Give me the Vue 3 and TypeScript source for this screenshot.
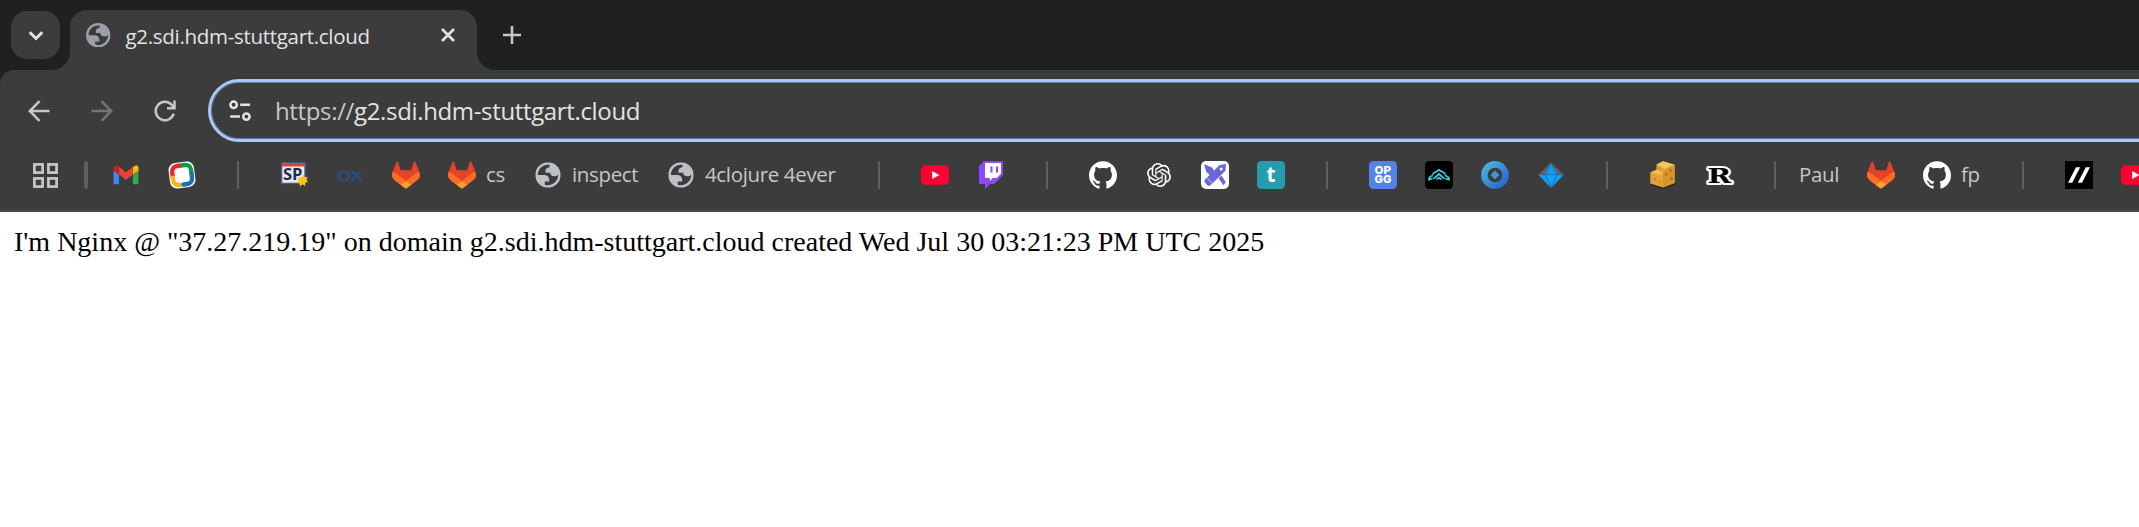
<script setup lang="ts">
interface Glyph {
  text: string
  x: number
  y: number
  width: number
  style: string
}

interface Bookmark {
  kind: 'icon' | 'label' | 'separator'
  icon?: string
  overlay?: string
  glyphs?: Glyph[]
  label?: string
  size?: string
}

const bookmarks: Bookmark[] = [
  { kind: 'icon', icon: 'gmail' },
  { kind: 'icon', icon: 'ring' },
  { kind: 'separator' },
  {
    kind: 'icon',
    icon: 'sp',
    overlay: 'star',
    glyphs: [{ text: 'SP', x: 3, y: 18.6, width: 19.5, style: 'glyph-sp' }],
  },
  {
    kind: 'icon',
    icon: 'blank',
    glyphs: [{ text: 'OX', x: 0.8, y: 19.6, width: 26.4, style: 'glyph-ox' }],
  },
  { kind: 'icon', icon: 'gitlab' },
  { kind: 'icon', icon: 'gitlab', label: 'cs', size: 'w-cs' },
  { kind: 'icon', icon: 'globe', label: 'inspect', size: 'w-inspect' },
  { kind: 'icon', icon: 'globe', label: '4clojure 4ever', size: 'w-clojure' },
  { kind: 'separator' },
  { kind: 'icon', icon: 'youtube' },
  { kind: 'icon', icon: 'twitch' },
  { kind: 'separator' },
  { kind: 'icon', icon: 'github' },
  { kind: 'icon', icon: 'openai' },
  { kind: 'icon', icon: 'excalidraw' },
  {
    kind: 'icon',
    icon: 'teal',
    glyphs: [{ text: 't', x: 9.4, y: 21, width: 9, style: 'glyph-t' }],
  },
  { kind: 'separator' },
  {
    kind: 'icon',
    icon: 'opgg',
    glyphs: [
      { text: 'OP', x: 5.6, y: 13, width: 16.5, style: 'glyph-opgg' },
      { text: 'GG', x: 5.6, y: 22.4, width: 16.8, style: 'glyph-opgg' },
    ],
  },
  { kind: 'icon', icon: 'lotus' },
  { kind: 'icon', icon: 'disc' },
  { kind: 'icon', icon: 'gem' },
  { kind: 'separator' },
  { kind: 'icon', icon: 'crate' },
  {
    kind: 'icon',
    icon: 'blank',
    glyphs: [{ text: 'R', x: 2.6, y: 21.6, width: 23.6, style: 'glyph-r' }],
  },
  { kind: 'separator' },
  { kind: 'label', label: 'Paul', size: 'w-paul' },
  { kind: 'icon', icon: 'gitlab' },
  { kind: 'icon', icon: 'github', label: 'fp', size: 'w-fp' },
  { kind: 'separator' },
  { kind: 'icon', icon: 'slashes' },
  { kind: 'icon', icon: 'youtube' },
]
</script>

<template>
  <div class="window">
    <svg class="defs" aria-hidden="true">
      <linearGradient id="discFill" x1="0" y1="0" x2="1" y2="1">
        <stop offset="0" stop-color="#4fb3d9" />
        <stop offset="1" stop-color="#2467d1" />
      </linearGradient>
      <symbol id="globe" viewBox="2 2 20 20">
        <path fill="currentColor" fill-rule="evenodd" d="M12 2c5.523 0 10 4.477 10 10s-4.477 10-10 10S2 17.523 2 12 6.477 2 12 2zM4 12h4.4c3.407.022 4.922 1.73 4.543 5.127H9.488v2.47a8.004 8.004 0 0 0 10.498-8.083C19.327 12.504 18.332 13 17 13c-2.137 0-3.206-.916-3.206-2.75h-3.748c-.274-2.728.683-4.092 2.87-4.092 0-.975.327-1.597.811-1.97A8.004 8.004 0 0 0 4 12z" />
      </symbol>
      <symbol id="i-blank" viewBox="0 0 28 28"></symbol>
      <symbol id="i-globe" viewBox="0 0 28 28">
        <use href="#globe" x="1.3" y="1.3" width="25.4" height="25.4" />
      </symbol>
      <symbol id="i-gmail" viewBox="0 0 28 28">
        <svg x="1.3" y="4.3" width="25.4" height="19.2" viewBox="52 42 88 66">
          <path fill="#4285f4" d="M58 108h14V74L52 59v43c0 3.32 2.69 6 6 6" />
          <path fill="#34a853" d="M120 108h14c3.32 0 6-2.69 6-6V59l-20 15" />
          <path fill="#fbbc04" d="M120 48v26l20-15v-8c0-7.42-8.47-11.65-14.4-7.2" />
          <path fill="#ea4335" d="M72 74V48l24 18 24-18v26L96 92" />
          <path fill="#c5221f" d="M52 51v8l20 15V48l-5.6-4.2c-5.94-4.45-14.4-.22-14.4 7.2" />
        </svg>
      </symbol>
      <symbol id="i-ring" viewBox="0 0 28 28">
        <g transform="rotate(-7 14 14)">
          <rect x="1.2" y="1.2" width="25.6" height="25.6" rx="7" fill="#fff" />
          <path d="M4.6 14.600V9.900a5.500 5.500 0 0 1 5.500-5.500H15" fill="none" stroke="#e8262b" stroke-width="4.400" />
          <path d="M14 4.400h4.200a5.400 5.400 0 0 1 5.400 5.400V14" fill="none" stroke="#0c9d4b" stroke-width="4.400" />
          <path d="M4.500 13.600v4.600a5.400 5.400 0 0 0 5.400 5.400h3" fill="none" stroke="#fcb31b" stroke-width="4.400" />
          <path d="M23.600 14v4.200a5.400 5.400 0 0 1-5.400 5.400H14.500" fill="none" stroke="#1d6db8" stroke-width="4.400" stroke-linecap="round" />
        </g>
      </symbol>
      <symbol id="i-sp" viewBox="0 0 28 28">
        <rect x="1.6" y="2" width="23.4" height="20.4" fill="#f6e6e6" stroke="#3c6396" stroke-width="1.4" />
        <path d="M2 4h23" stroke="#d64541" stroke-width="3" />
        <path d="M2 3h23" stroke="#b6322f" stroke-width="1" stroke-dasharray="2 2" />
      </symbol>
      <symbol id="i-star" viewBox="0 0 28 28">
        <path d="M23.2 13.2l1.500 3.300 3-.8-1.200 3 1.500 2.400-2.900.5.2 3.600-2.700-2-2.800 2.400-.2-3.300-3.200-.8 2.500-2.200-1.200-3 3.200.4z" fill="#fcc41c" />
      </symbol>
      <symbol id="i-gitlab" viewBox="0 0 25 24">
        <path fill="#e24329" d="M24.507 9.5l-.034-.09L21.082.562a.896.896 0 0 0-1.694.091l-2.29 7.01H7.825L5.535.653a.898.898 0 0 0-1.694-.09L.451 9.411.416 9.5a6.297 6.297 0 0 0 2.09 7.278l.012.01.03.022 5.16 3.867 2.56 1.935 1.554 1.176a1.051 1.051 0 0 0 1.268 0l1.555-1.176 2.56-1.935 5.197-3.89.014-.01A6.297 6.297 0 0 0 24.507 9.5z" />
        <path fill="#fc6d26" d="M24.507 9.5l-.034-.09a11.44 11.44 0 0 0-4.56 2.051l-7.447 5.632 4.742 3.584 5.197-3.89.014-.01A6.297 6.297 0 0 0 24.507 9.5z" />
        <path fill="#fca326" d="M7.707 20.677l2.56 1.935 1.555 1.176a1.051 1.051 0 0 0 1.268 0l1.555-1.176 2.56-1.935-4.743-3.584z" />
        <path fill="#fc6d26" d="M5.01 11.461a11.43 11.43 0 0 0-4.56-2.05L.416 9.5a6.297 6.297 0 0 0 2.09 7.278l.012.01.03.022 5.16 3.867 4.745-3.584z" />
      </symbol>
      <symbol id="i-youtube" viewBox="0 0 28 28">
        <rect y="4.2" width="28" height="19.6" rx="4.6" fill="#ff0033" />
        <path d="M11.2 9.9v8.2l7.2-4.1z" fill="#fff" />
      </symbol>
      <symbol id="i-twitch" viewBox="0 0 2400 2800">
        <path fill="#fff" d="M2200 1300l-400 400h-400l-350 350v-350H600V200h1600z" />
        <path fill="#9146ff" fill-rule="evenodd" d="M500 0L0 500v1800h600v500l500-500h400l900-900V0zM2200 1300l-400 400h-400l-350 350v-350H600V200h1600z" />
        <path fill="#9146ff" d="M1700 550h200v600h-200zM1150 550h200v600h-200z" />
      </symbol>
      <symbol id="i-github" viewBox="0 0 24 24">
        <path fill="#fff" d="M12 .297c-6.63 0-12 5.373-12 12 0 5.303 3.438 9.8 8.205 11.385.6.113.82-.258.82-.577 0-.285-.01-1.04-.015-2.04-3.338.724-4.042-1.61-4.042-1.61C4.422 18.07 3.633 17.7 3.633 17.7c-1.087-.744.084-.729.084-.729 1.205.084 1.838 1.236 1.838 1.236 1.07 1.835 2.809 1.305 3.495.998.108-.776.417-1.305.76-1.605-2.665-.3-5.466-1.332-5.466-5.93 0-1.31.465-2.38 1.235-3.22-.135-.303-.54-1.523.105-3.176 0 0 1.005-.322 3.3 1.23.96-.267 1.98-.399 3-.405 1.02.006 2.04.138 3 .405 2.28-1.552 3.285-1.23 3.285-1.23.645 1.653.24 2.873.12 3.176.765.84 1.23 1.91 1.23 3.22 0 4.61-2.805 5.625-5.475 5.92.42.36.81 1.096.81 2.22 0 1.606-.015 2.896-.015 3.286 0 .315.21.69.825.57C20.565 22.092 24 17.592 24 12.297c0-6.627-5.373-12-12-12" />
      </symbol>
      <symbol id="i-openai" viewBox="-2 -2 28 28">
        <path fill="#fff" d="M22.2819 9.8211a5.9847 5.9847 0 0 0-.5157-4.9108 6.0462 6.0462 0 0 0-6.5098-2.9A6.0651 6.0651 0 0 0 4.9807 4.1818a5.9847 5.9847 0 0 0-3.9977 2.9 6.0462 6.0462 0 0 0 .7427 7.0966 5.98 5.98 0 0 0 .511 4.9107 6.051 6.051 0 0 0 6.5146 2.9001A5.9847 5.9847 0 0 0 13.2599 24a6.0557 6.0557 0 0 0 5.7718-4.2058 5.9894 5.9894 0 0 0 3.9977-2.9001 6.0557 6.0557 0 0 0-.7475-7.0729zm-9.022 12.6081a4.4755 4.4755 0 0 1-2.8764-1.0408l.1419-.0804 4.7783-2.7582a.7948.7948 0 0 0 .3927-.6813v-6.7369l2.02 1.1686a.071.071 0 0 1 .038.052v5.5826a4.504 4.504 0 0 1-4.4945 4.4944zm-9.6607-4.1254a4.4708 4.4708 0 0 1-.5346-3.0137l.142.0852 4.783 2.7582a.7712.7712 0 0 0 .7806 0l5.8428-3.3685v2.3324a.0804.0804 0 0 1-.0332.0615L9.74 19.9502a4.4992 4.4992 0 0 1-6.1408-1.6464zM2.3408 7.8956a4.485 4.485 0 0 1 2.3655-1.9728V11.6a.7664.7664 0 0 0 .3879.6765l5.8144 3.3543-2.0201 1.1685a.0757.0757 0 0 1-.071 0l-4.8303-2.7865A4.504 4.504 0 0 1 2.3408 7.872zm16.5963 3.8558L13.1038 8.364 15.1192 7.2a.0757.0757 0 0 1 .071 0l4.8303 2.7913a4.4944 4.4944 0 0 1-.6765 8.1042v-5.6772a.79.79 0 0 0-.407-.667zm2.0107-3.0231l-.142-.0852-4.7735-2.7818a.7759.7759 0 0 0-.7854 0L9.409 9.2297V6.8974a.0662.0662 0 0 1 .0284-.0615l4.8303-2.7866a4.4992 4.4992 0 0 1 6.6802 4.66zM8.3065 12.863l-2.02-1.1638a.0804.0804 0 0 1-.038-.0567V6.0742a4.4992 4.4992 0 0 1 7.3757-3.4537l-.142.0805L8.704 5.459a.7948.7948 0 0 0-.3927.6813zm1.0976-2.3654l2.602-1.4998 2.6069 1.4998v2.9994l-2.5974 1.4997-2.6067-1.4997Z" />
      </symbol>
      <symbol id="i-excalidraw" viewBox="0 0 28 28">
        <rect width="28" height="28" rx="5" fill="#fff" />
        <path d="M3 3.2l8.5 3.6 1.8 4-3.6 4.2-4.4-4.2zM17.6 17.2l2.8-2.6 4.4 6.6-2.4 3z" fill="#6965db" />
        <path d="M25 3l-.6 6.8L9.2 24.6 7 24.8 3.4 21l.4-2.2L18.6 4z" fill="#6965db" />
        <circle cx="20.2" cy="8" r="1.5" fill="#fff" />
        <path d="M6.4 17.2l4.8 5" stroke="#fff" stroke-width=".7" />
      </symbol>
      <symbol id="i-teal" viewBox="0 0 28 28">
        <rect width="28" height="28" rx="4.5" fill="#259dad" />
      </symbol>
      <symbol id="i-opgg" viewBox="0 0 28 28">
        <rect width="28" height="28" rx="4.5" fill="#5383e8" />
      </symbol>
      <symbol id="i-lotus" viewBox="0 0 28 28">
        <rect width="28" height="28" rx="4.5" fill="#000" />
        <g fill="none" stroke="#3dd5de" stroke-width="1.7">
          <path d="M7.500 13.600c1-2.400 3.700-2.200 6.500-4.800 2.800 2.600 5.500 2.400 6.500 4.800" />
          <path d="M8.500 17.800l5.500-4.800 5.500 4.800M11.500 18.700l2.500-2 2.500 2" />
          <path d="M8 14.500c-2.500.5-4 2-4 4l3.500-1M20 14.500c2.500.5 4 2 4 4l-3.500-1" />
        </g>
      </symbol>
      <symbol id="i-disc" viewBox="0 0 28 28">
        <circle cx="14" cy="14" r="10.600" fill="none" stroke="url(#discFill)" stroke-width="6.600" />
        <path d="M14 9.600l4.400 4.400-4.400 4.400L9.600 14z" fill="#3f97d8" />
      </symbol>
      <symbol id="i-gem" viewBox="0 0 28 28">
        <path d="M14 1.500L1.300 13.800l4.900 1.600h15.500l5-1.600z" fill="#67616a" />
        <path d="M14 1.500L8 13.600l12.300-.2z" fill="#0d9bf2" />
        <path d="M1.300 13.800l6.700-.3 12.300-.2 6.400.5L14 27z" fill="#109ffa" />
        <path d="M14 2L8 13.500l6 13 6.300-13L14 2M2 13.800l6-.3h12.300l6 .3" fill="none" stroke="#29638f" stroke-width=".8" />
      </symbol>
      <symbol id="i-crate" viewBox="0 0 28 28">
        <path d="M2 24l11 4 13-4v-3H2z" fill="#2a2724" />
        <path d="M7.500 3.500L14 .3l11.600 3.400V22L14 26.600l-12.700-4V11.500l6.200-2.700z" fill="#e3a235" />
        <path d="M7.500 3.500L14 .3l11.600 3.400-9 4.300z" fill="#f4c55d" />
        <path d="M1.300 11.500l6.200-2.700 6 2.700-1 2.700z" fill="#f0bd54" />
        <path d="M16.600 8l9-4.300V22L14 26.600V13z" fill="#d8942d" />
        <g fill="#ad6f20">
          <circle cx="21.500" cy="9.500" r="1.300" /><circle cx="17.300" cy="13.500" r="1.400" />
          <circle cx="22.500" cy="17.500" r="1.500" /><circle cx="6" cy="18" r="1" />
          <circle cx="10.300" cy="7.600" r=".7" /><circle cx="10.500" cy="21" r=".8" />
        </g>
      </symbol>
      <symbol id="i-slashes" viewBox="0 0 28 28">
        <rect width="28" height="28" fill="#000" />
        <path d="M3 21.800L11 6.200h4.200L7.200 21.800zM12.800 21.800l8-15.600H25l-8 15.600z" fill="#fff" />
      </symbol>
    </svg>

    <header class="tabstrip">
      <button class="tab-search" type="button">
        <svg width="16" height="11" viewBox="0 0 16 11"><path d="M1.700 2.200L8 8.500l6.300-6.300" fill="none" stroke="#e3e3e3" stroke-width="3" /></svg>
      </button>
      <div class="tab">
        <svg class="favicon"><use href="#globe" /></svg>
        <span class="tab-title">g2.sdi.hdm-stuttgart.cloud</span>
        <svg class="close" width="14" height="14" viewBox="0 0 14 14"><path d="M1 1l12 12M13 1L1 13" stroke="#e3e3e3" stroke-width="2.600" /></svg>
      </div>
      <svg class="new-tab" width="18" height="18" viewBox="0 0 18 18"><path d="M9 0v18M0 9h18" stroke="#c7c7c7" stroke-width="2.600" /></svg>
    </header>

    <section class="chrome">
      <div class="toolbar">
        <svg class="nav" viewBox="0 0 22 22"><path d="M11.500 1.200L1.800 11l9.700 9.800M2 11h19.500" fill="none" stroke="#c7c7c7" stroke-width="2.500" /></svg>
        <svg class="nav dim" viewBox="0 0 22 22"><path d="M10.500 1.200L20.200 11l-9.700 9.800M20 11H.5" fill="none" stroke="#757575" stroke-width="2.500" /></svg>
        <svg class="nav" viewBox="0 0 22 22"><path d="M19.700 13.700A9.200 9.200 0 1 1 18 5.200l1.800 2.200M20.500.6v7.700H13" fill="none" stroke="#c7c7c7" stroke-width="2.500" /></svg>
        <div class="omnibox">
          <svg class="tune" width="22" height="22" viewBox="0 0 22 22" fill="none" stroke="#e3e3e3" stroke-width="2.500">
            <circle cx="4.600" cy="4.800" r="3.200" /><path d="M11.200 4.800H21M1.200 16.600H11" /><circle cx="17.400" cy="16.600" r="3.200" />
          </svg>
          <span class="url"><span class="scheme">https://</span><span class="host">g2.sdi.hdm-stuttgart.cloud</span></span>
        </div>
      </div>
      <nav class="bookmarks">
        <svg class="apps" width="25" height="25" viewBox="0 0 25 25" fill="none" stroke="#c7c7c7" stroke-width="2.700">
          <rect x="1.400" y="1.400" width="8.200" height="8.200" /><rect x="15.400" y="1.400" width="8.200" height="8.200" />
          <rect x="1.400" y="15.400" width="8.200" height="8.200" /><rect x="15.400" y="15.400" width="8.200" height="8.200" />
        </svg>
        <span class="apps-divider"></span>
        <template v-for="(item, index) in bookmarks" :key="index">
          <span v-if="item.kind === 'separator'" class="separator"></span>
          <span v-else class="bookmark" :class="{ plain: item.kind === 'label' }">
            <svg v-if="item.icon" class="icon" viewBox="0 0 28 28">
              <use :href="'#i-' + item.icon" width="28" height="28" />
              <text
                v-for="glyph in item.glyphs"
                :key="glyph.text"
                :class="glyph.style"
                :x="glyph.x"
                :y="glyph.y"
                :textLength="glyph.width"
                lengthAdjust="spacingAndGlyphs"
              >{{ glyph.text }}</text>
              <use v-if="item.overlay" :href="'#i-' + item.overlay" width="28" height="28" />
            </svg>
            <span v-if="item.label" class="label" :class="item.size">{{ item.label }}</span>
          </span>
        </template>
      </nav>
    </section>

    <main class="page">I'm Nginx @ "37.27.219.19" on domain g2.sdi.hdm-stuttgart.cloud created Wed Jul 30 03:21:23 PM UTC 2025</main>
  </div>
</template>

<style>
body {
  margin: 0;
  background: #fff;
}
</style>

<style scoped>
.window {
  width: 100%;
  height: 527px;
  overflow: hidden;
  background: #fff;
  font-family: "Open Sans", "Noto Sans", sans-serif;
}
.defs {
  position: absolute;
  width: 0;
  height: 0;
}
.tabstrip {
  display: flex;
  box-sizing: border-box;
  height: 84px;
  padding: 10px 0 14px 11px;
  background: #1f2120;
}
.tab-search {
  display: flex;
  align-items: center;
  justify-content: center;
  width: 49px;
  height: 48px;
  margin: 1px 0 0;
  padding: 0;
  border: 0;
  border-radius: 16px;
  background: #3c3c3c;
}
.tab {
  position: relative;
  display: flex;
  align-items: center;
  box-sizing: border-box;
  width: 407px;
  height: 60px;
  margin-left: 10px;
  padding: 0 22px 10px 16px;
  border-radius: 17px 17px 0 0;
  background: #3c3c3c;
}
.tab::before,
.tab::after {
  content: "";
  position: absolute;
  bottom: 0;
  width: 18px;
  height: 18px;
}
.tab::before {
  right: 100%;
  background: radial-gradient(circle at 0 0, transparent 17.5px, #3c3c3c 18.5px);
}
.tab::after {
  left: 100%;
  background: radial-gradient(circle at 100% 0, transparent 17.5px, #3c3c3c 18.5px);
}
.favicon {
  width: 24.5px;
  height: 24.5px;
  color: #9aa0a6;
}
.tab-title {
  flex: 1;
  margin: 1px 0 0 15px;
  color: #e3e3e3;
  font-size: 20.5px;
  line-height: 28px;
  letter-spacing: -0.3px;
  white-space: nowrap;
}
.close {
  flex: none;
}
.new-tab {
  margin: 16px 0 0 26px;
}
.chrome {
  box-sizing: border-box;
  height: 142px;
  margin-top: -14px;
  border-bottom: 2px solid #474747;
  border-radius: 14px 0 0 0;
  background: #3c3c3c;
}
.toolbar {
  display: flex;
  align-items: center;
  height: 81px;
  padding-left: 28px;
}
.nav {
  flex: none;
  width: 22px;
  height: 22px;
  margin-right: 41px;
}
.nav + .nav + .nav {
  margin-right: 32px;
}
.omnibox {
  display: flex;
  flex: 1;
  align-items: center;
  box-sizing: border-box;
  height: 63px;
  margin-right: -60px;
  padding-left: 18px;
  border: 3px solid #a8c7fa;
  border-radius: 32px;
  box-shadow: inset 0 0 0 1px #67758e;
}
.tune {
  flex: none;
}
.url {
  margin-left: 24px;
  color: #e3e3e3;
  font-size: 24px;
  line-height: 32px;
  letter-spacing: -0.35px;
  white-space: nowrap;
}
.scheme {
  color: #c7c7c7;
}
.bookmarks {
  display: flex;
  align-items: center;
  gap: 28px;
  height: 48px;
  padding-left: 33px;
}
.apps {
  flex: none;
}
.apps-divider {
  flex: none;
  width: 4px;
  height: 28px;
  margin: 0 -4px 0 -2px;
  border-radius: 2px;
  background: #5f5f5f;
}
.bookmark {
  display: flex;
  flex: none;
  align-items: center;
}
.separator {
  flex: none;
  width: 2px;
  height: 28px;
  margin: 0 13px;
  background: #5f5f5f;
}
.icon {
  flex: none;
  width: 28px;
  height: 28px;
  overflow: visible;
  color: #bdc1c6;
}
.glyph-sp {
  fill: #12305c;
  font: 700 16.5px "Open Sans", sans-serif;
}
.glyph-ox {
  fill: #25507f;
  stroke: #25507f;
  stroke-width: 0.6px;
  font: 400 14px "DejaVu Sans", sans-serif;
}
.glyph-t {
  fill: #fff;
  font: 700 22px "Noto Sans", sans-serif;
}
.glyph-opgg {
  fill: #fff;
  font: 800 11px Inter, sans-serif;
}
.glyph-r {
  fill: #000;
  stroke: #fff;
  stroke-width: 4px;
  stroke-linejoin: round;
  paint-order: stroke;
  font: 700 21px "DejaVu Serif", serif;
}
.label {
  margin: -2px 0 0 10px;
  color: #c7c7c7;
  font-size: 20.5px;
  line-height: 28px;
  letter-spacing: -0.35px;
  white-space: nowrap;
}
.plain {
  margin-left: -18px;
}
.plain .label {
  margin-left: 0;
}
.w-cs,
.w-fp {
  width: 20px;
}
.w-inspect {
  width: 67px;
}
.w-clojure {
  width: 132px;
}
.w-paul {
  width: 40px;
}
.page {
  padding: 14px;
  color: #000;
  font-family: "Liberation Serif", "Times New Roman", serif;
  font-size: 28px;
  line-height: 32px;
  white-space: nowrap;
}
</style>
